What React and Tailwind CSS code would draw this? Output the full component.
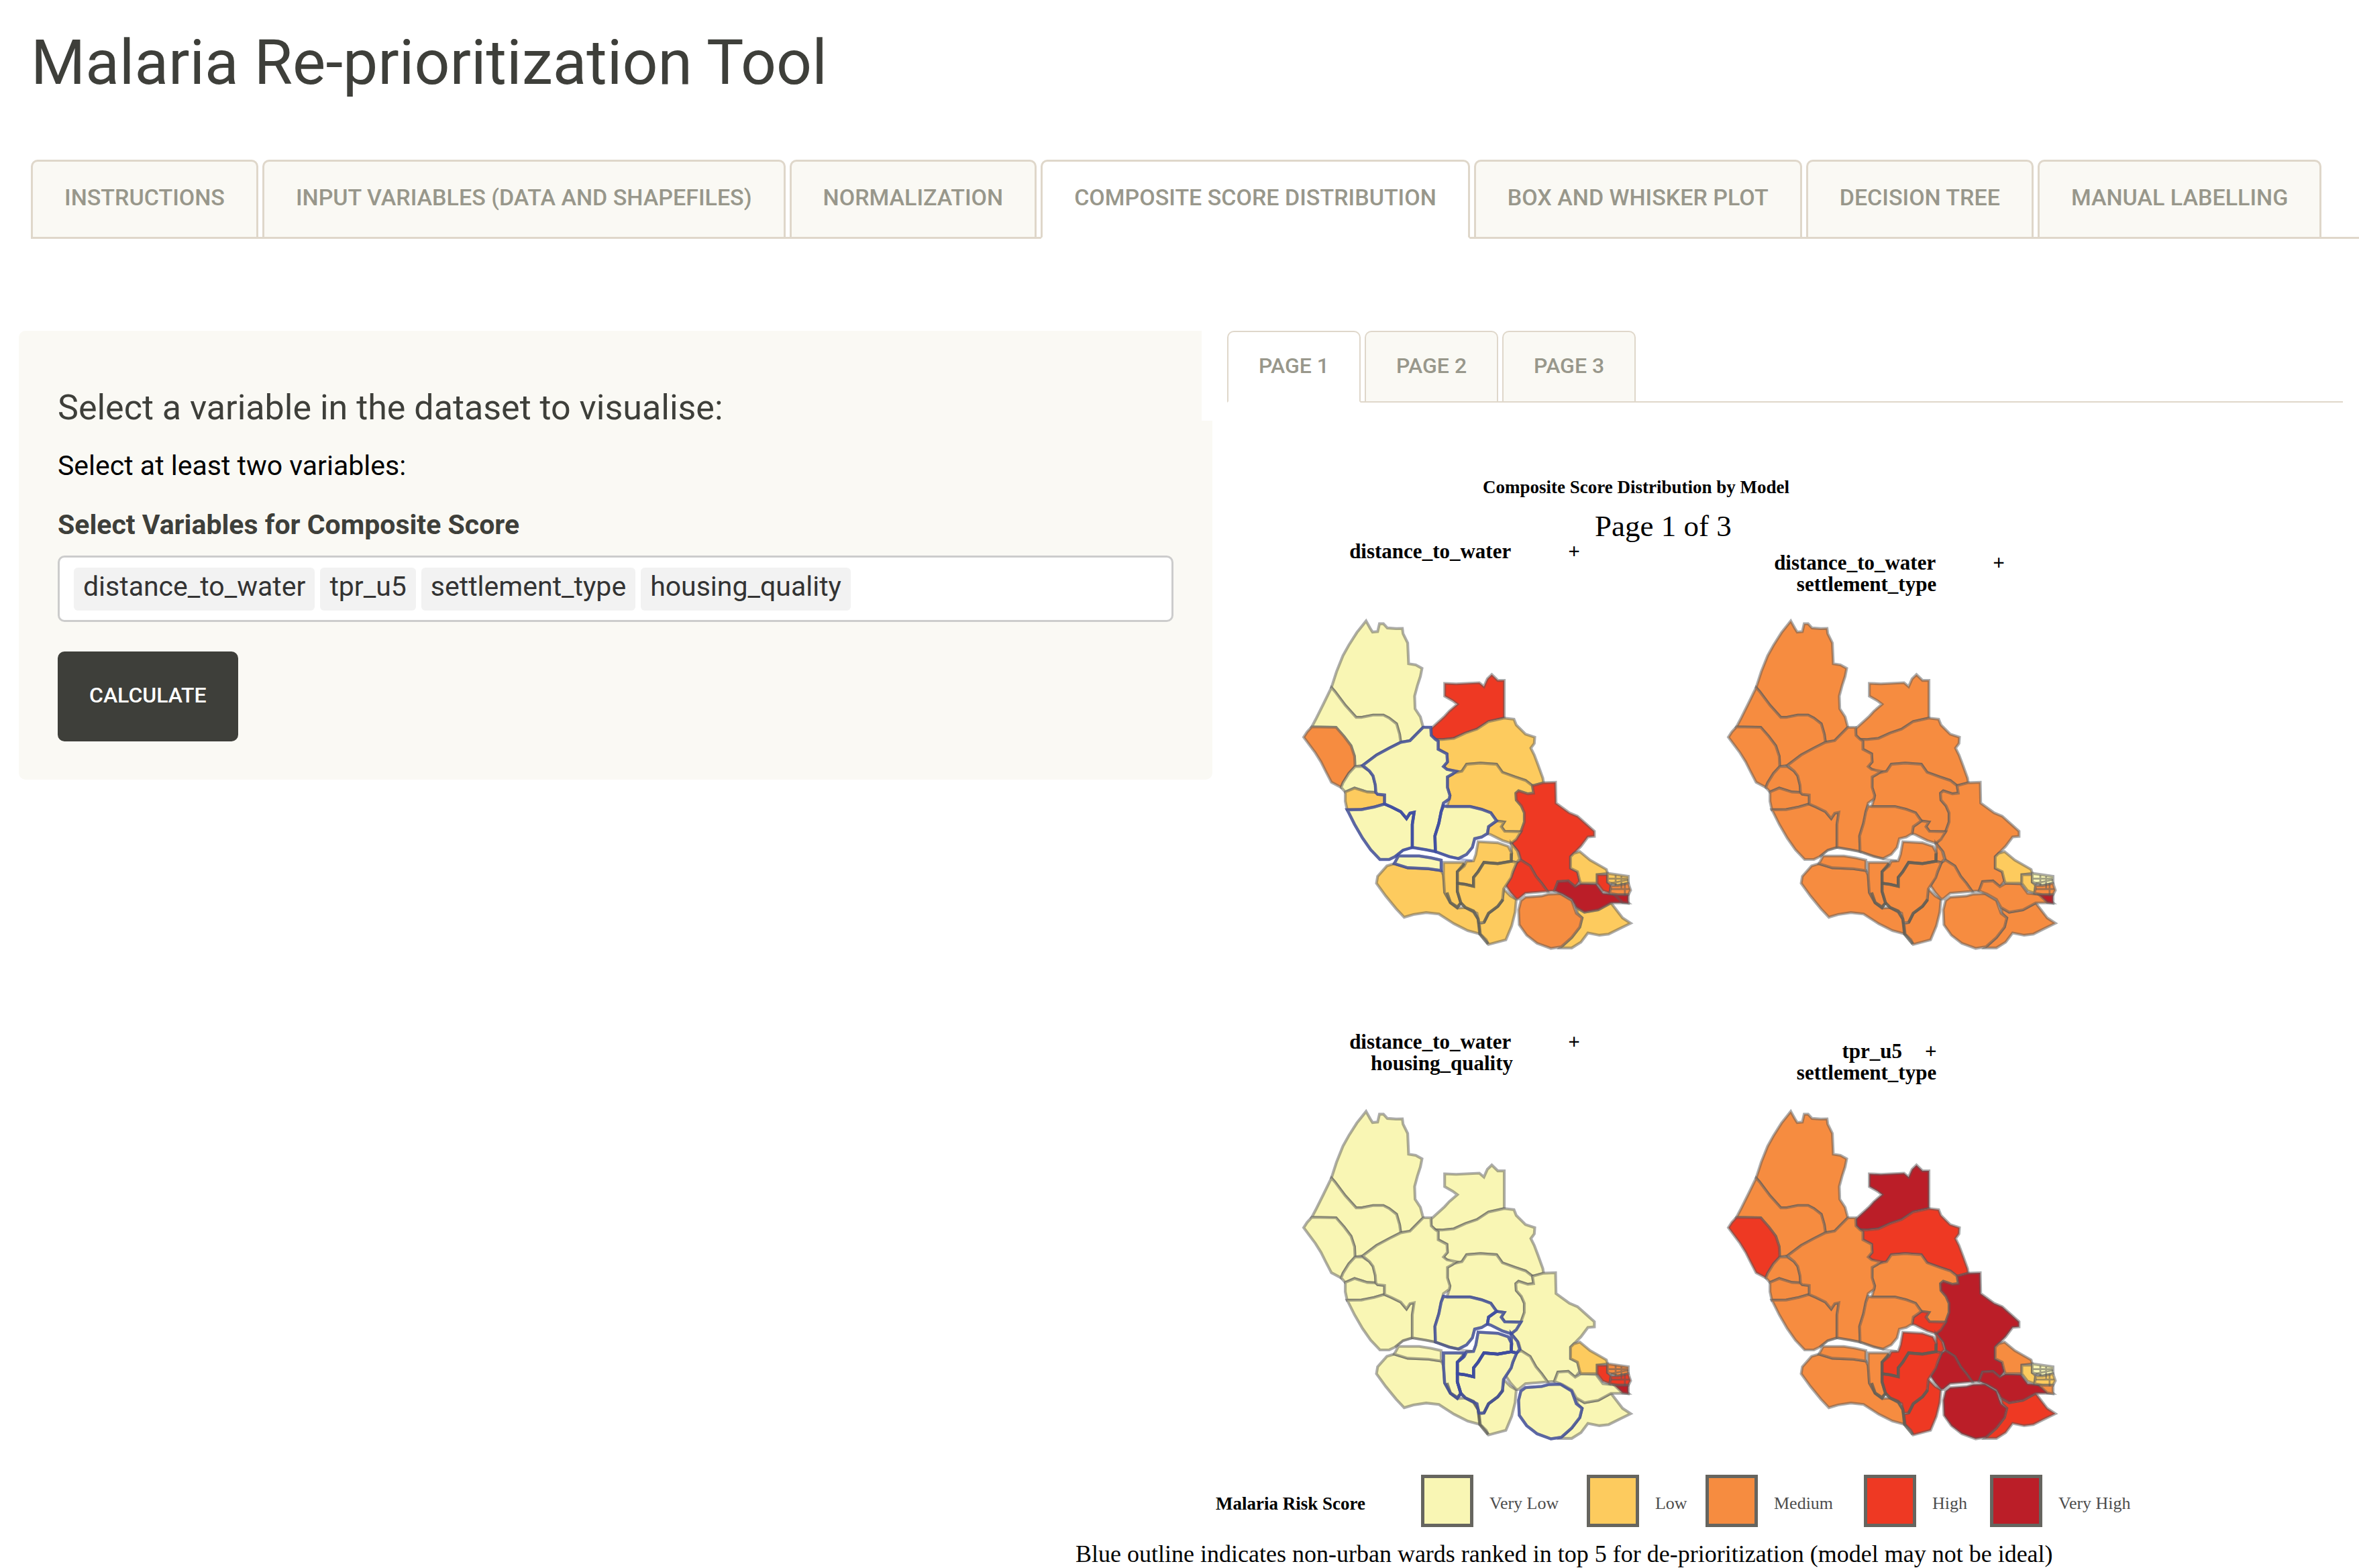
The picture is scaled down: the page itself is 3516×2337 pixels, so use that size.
import React from "react";

const FILL = { VL: "#f9f6b4", L: "#fdcb5e", M: "#f68c40", H: "#ee3923", VH: "#bb1e28" };

// Ward outlines, drawn on a 1568 x 1568 canvas.
const WARDS = {
  A: "340,80 358,112 368,128 390,126 398,92 415,92 432,110 470,113 497,112 500,135 520,175 524,265 555,270 582,285 575,320 562,360 550,405 552,460 575,495 587,540 530,598 490,605 485,570 472,525 440,500 415,487 370,487 320,497 297,497 250,445 205,385 190,368 212,300 240,230 265,185 300,130",
  B: "190,368 205,385 250,445 297,497 320,497 370,487 415,487 440,500 472,525 485,570 490,605 440,630 385,660 325,705 292,710 290,665 275,620 245,580 210,540 105,538 125,500 155,440",
  C: "105,538 210,540 245,580 275,620 290,665 292,710 265,740 240,780 232,800 190,778 165,730 145,690 120,650 90,610 70,583 85,560",
  D: "292,710 325,710 355,730 370,750 380,790 382,822 345,820 290,803 250,820 232,800 240,780 265,740",
  E: "250,820 290,803 345,820 382,822 390,830 420,833 420,872 375,885 320,896 258,897 250,860",
  G: "258,897 320,896 375,885 420,872 450,885 490,905 515,935 530,912 548,908 540,960 540,1060 500,1072 465,1100 440,1112 400,1112 360,1070 325,1020 290,960 265,910",
  H: "680,350 730,352 830,347 850,364 865,330 884,312 910,337 938,337 938,500 870,515 820,548 770,565 720,588 670,593 640,592 622,575 622,545 680,492 700,470 735,440 715,425 680,405",
  I: "938,500 980,505 990,530 1030,570 1070,583 1068,610 1053,630 1068,660 1085,705 1105,760 1108,780 1060,793 1030,770 985,755 930,735 905,700 835,695 775,700 755,730 720,738 690,722 675,710 692,690 690,655 652,635 652,600 640,592 670,593 720,588 770,565 820,548 870,515",
  J: "720,738 755,730 775,700 835,695 905,700 930,735 985,755 1030,770 1060,793 1065,825 1040,828 1000,815 988,825 990,855 1012,880 1025,910 1025,950 1010,992 940,990 925,970 938,950 905,945 880,910 840,895 790,883 690,883 700,850 703,835 692,800 692,755",
  K: "1060,793 1108,780 1160,778 1162,868 1220,910 1255,925 1300,965 1328,990 1328,1012 1300,1015 1270,1055 1240,1085 1225,1100 1225,1150 1255,1165 1265,1205 1245,1230 1215,1205 1170,1208 1155,1248 1125,1250 1100,1215 1075,1185 1050,1140 1010,1115 1000,1080 968,1042 1010,992 1025,950 1025,910 1012,880 990,855 988,825 1000,815 1040,828 1065,825",
  M: "905,945 938,950 925,970 940,990 1010,992 990,1025 968,1042 930,1030 880,1005 865,1000 870,970",
  O: "462,1130 520,1148 610,1152 665,1160 675,1180 680,1255 705,1300 735,1322 770,1320 805,1340 825,1370 835,1435 780,1420 720,1390 655,1348 600,1342 545,1350 505,1362 470,1325 425,1270 385,1215 390,1185 430,1140",
  P: "675,1125 765,1125 760,1145 735,1165 735,1250 750,1300 735,1322 705,1300 680,1255 675,1180",
  S: "935,1240 965,1270 990,1285 985,1340 970,1400 945,1460 870,1480 860,1460 835,1435 830,1390 850,1385 870,1345 910,1315 930,1290",
  T: "992,1125 1010,1115 1050,1140 1075,1185 1100,1215 1125,1250 1030,1258 1000,1283 990,1283 965,1255 945,1225 970,1180",
  Z: "968,1042 995,1075 1005,1110 992,1125 968,1120 970,1085",
  Q: "825,1035 910,1040 955,1055 970,1085 968,1120 910,1130 850,1125 825,1165 805,1190 805,1228 770,1220 735,1215 735,1165 765,1140 775,1120 805,1118 815,1090",
  R: "968,1120 992,1125 975,1165 968,1190 935,1240 930,1290 910,1315 870,1345 850,1385 828,1385 820,1345 770,1320 750,1300 735,1250 735,1215 770,1220 805,1228 805,1190 825,1165 850,1125 910,1130",
  W: "1250,1320 1285,1340 1345,1330 1400,1300 1415,1320 1450,1365 1485,1388 1440,1410 1390,1435 1350,1440 1300,1430 1270,1470 1230,1495 1180,1495 1230,1450 1265,1405 1275,1365 1255,1345",
  U: "1010,1290 1030,1275 1100,1270 1130,1262 1180,1260 1230,1290 1250,1345 1275,1365 1265,1405 1230,1450 1185,1490 1140,1497 1080,1475 1035,1440 1003,1395 1000,1330",
  V: "1155,1248 1170,1208 1215,1205 1245,1230 1270,1215 1335,1218 1365,1258 1430,1265 1475,1300 1400,1300 1345,1330 1285,1340 1250,1320 1230,1285 1190,1262",
  X: "1240,1085 1265,1078 1310,1115 1380,1155 1385,1172 1340,1178 1340,1215 1270,1215 1265,1205 1255,1165 1225,1150 1225,1100",
  Y1: "1340,1178 1385,1178 1385,1210 1400,1225 1395,1258 1365,1248 1340,1215",
  Y2: "1385,1172 1475,1185 1475,1215 1430,1225 1385,1210",
  Y3: "1400,1225 1430,1225 1475,1215 1485,1245 1475,1265 1430,1265 1395,1258",
  Y4: "1415,1265 1475,1265 1475,1302 1450,1298",
  F: "587,540 620,540 622,575 640,592 652,600 652,635 690,655 692,690 675,710 690,722 730,730 715,742 692,755 692,800 703,835 700,850 675,868 665,905 655,955 638,1010 640,1078 600,1070 540,1060 540,960 548,908 530,912 515,935 490,905 450,885 420,872 420,833 390,830 382,822 380,790 370,750 355,730 325,705 385,660 440,630 490,605 530,598",
  L: "675,880 690,883 790,883 840,895 880,910 905,945 870,970 865,1000 840,1015 810,1022 800,1060 775,1090 740,1108 700,1100 640,1078 638,1010 655,955 665,905",
  N: "480,1097 570,1097 620,1105 665,1115 665,1160 610,1152 520,1148 462,1130",
};

const CREEKS = [
  "765,1130 735,1165 735,1250 750,1300 735,1318 705,1298 690,1255",
  "735,1215 770,1220 805,1228 805,1190 825,1165 850,1125 910,1130 968,1120 968,1085",
  "750,1300 770,1320 805,1335 825,1370 832,1435 868,1478",
  "850,1385 870,1345 910,1315 932,1285",
];

const MAPS = [
  {
    title: ["distance_to_water", "+", ""],
    base: "VL",
    fills: { C: "M", E: "L", H: "H", I: "L", J: "L", K: "H", M: "L", O: "L", P: "L", Q: "L", R: "L", S: "L", Z: "L", T: "H", U: "M", V: "VH", W: "L", X: "L", Y1: "H", Y2: "L", Y3: "M", Y4: "VH" },
    blue: ["F", "L", "G", "N"],
  },
  {
    title: ["distance_to_water", "+", "settlement_type"],
    base: "M",
    fills: { X: "L", Y1: "L", Y2: "VL", Y4: "VH" },
    blue: [],
  },
  {
    title: ["distance_to_water", "+", "housing_quality"],
    base: "VL",
    fills: { X: "L", Y1: "H", Y2: "M", Y3: "H", Y4: "VH" },
    blue: ["L", "M", "P", "Q", "R", "Z", "U"],
  },
  {
    title: ["tpr_u5", "+", "settlement_type"],
    base: "M",
    fills: { C: "H", H: "VH", I: "H", K: "VH", M: "H", Q: "H", R: "H", S: "H", Z: "H", T: "VH", U: "VH", V: "VH", W: "H", Y1: "L", Y2: "VL", Y3: "L" },
    blue: [],
  },
];

function WardMap({ map }) {
  const outline = (k) => map.blue.includes(k);
  return (
    <svg viewBox="0 0 1568 1568" className="block h-[540px] w-[540px]" role="img" aria-label={map.title.join(" ")}>
      {Object.entries(WARDS).map(([k, pts]) => (
        <polygon key={k} points={pts} fill={FILL[map.fills[k] || map.base]} stroke="#595959" strokeOpacity="0.5" strokeWidth="12" />
      ))}
      {CREEKS.map((pts) => (
        <polyline key={pts} points={pts} fill="none" stroke="#5c5c54" strokeOpacity="0.75" strokeWidth="13" />
      ))}
      {Object.entries(WARDS).map(([k, pts]) =>
        outline(k) ? <polygon key={k} points={pts} fill="none" stroke="#3a4aa5" strokeOpacity="0.7" strokeWidth="13" /> : null
      )}
      <g fill="none" stroke="#595959" strokeOpacity="0.55" strokeWidth="8">
        <path d="M1390 1195H1470M1400 1215L1475 1200M1420 1180V1225M1445 1185V1240M1400 1240H1480M1460 1215V1270" />
      </g>
      <path
        d="M465 1100L500 1072L540 1060L600 1070L640 1078L740 1110L800 1118"
        fill="none"
        stroke={map.blue.includes("F") ? "#3a4aa5" : "#595959"}
        strokeOpacity="0.4"
        strokeWidth="10"
      />
    </svg>
  );
}

function MapTitle({ title, gap }) {
  return (
    <h3 className="w-[540px] pr-3 text-[31px] leading-8 font-bold whitespace-nowrap">
      <span className={"flex justify-center " + gap}>
        <span>{title[0]}</span>
        <span>{title[1]}</span>
      </span>
      {title[2] && <span className="block pr-17 text-center">{title[2]}</span>}
    </h3>
  );
}

const TABS = [
  "Instructions",
  "Input variables (data and shapefiles)",
  "Normalization",
  "Composite score distribution",
  "Box and whisker plot",
  "Decision tree",
  "Manual labelling",
];

function MainTab({ label, active }) {
  return (
    <button
      type="button"
      role="tab"
      aria-selected={active}
      className={
        "rounded-t-[10px] border-3 px-[47px] pt-[33px] pb-[39px] text-[34px] leading-10 font-medium whitespace-nowrap text-[#98978b] uppercase " +
        (active ? "-mb-[3px] border-[#dfd7ca] border-b-white bg-white" : "border-[#dfd7ca] border-b-0 bg-[#faf9f4]")
      }
    >
      {label}
    </button>
  );
}

function PageTab({ label, active }) {
  return (
    <button
      type="button"
      role="tab"
      aria-selected={active}
      className={
        "rounded-t-[10px] border-2 px-[45px] pt-[30px] pb-[33px] text-[32px] leading-10 font-medium whitespace-nowrap text-[#98978b] uppercase " +
        (active ? "-mb-[2px] border-[#dfd7ca] border-b-white bg-white" : "border-[#dfd7ca] border-b-0 bg-[#faf9f4]")
      }
    >
      {label}
    </button>
  );
}

const LEGEND = [
  ["Very Low", "bg-[#f9f6b4]"],
  ["Low", "bg-[#fdcb5e]"],
  ["Medium", "bg-[#f68c40]"],
  ["High", "bg-[#ee3923]"],
  ["Very High", "bg-[#bb1e28]"],
];

const CHIPS = ["distance_to_water", "tpr_u5", "settlement_type", "housing_quality"];

export default function App() {
  return (
    <div className="overflow-hidden bg-white pt-11 font-[Roboto,sans-serif] text-[#3e3f3a]">
      <h1 className="pl-[46px] text-[93px] leading-[100px] font-normal">Malaria Re-prioritization Tool</h1>

      <div role="tablist" className="mt-[94px] ml-[46px] flex gap-[6px] border-b-3 border-[#dfd7ca]">
        {TABS.map((t) => (
          <MainTab key={t} label={t} active={t === "Composite score distribution"} />
        ))}
      </div>

      <main className="mt-[137px] grid grid-cols-[1779fr_1685fr] items-start pr-6 pl-7">
        <form className="min-w-0 rounded-[10px] bg-[#faf9f4] px-[58px] pt-[87px] pb-[57px]" onSubmit={(e) => e.preventDefault()}>
          <h4 className="text-[52px] leading-14">Select a variable in the dataset to visualise:</h4>
          <p className="mt-[34px] text-[41px] leading-12 text-black">Select at least two variables:</p>
          <label htmlFor="variables" className="mt-10 block text-[41px] leading-12 font-bold">
            Select Variables for Composite Score
          </label>
          <div className="mt-[22px] flex h-[99px] items-center gap-2 rounded-[10px] border-3 border-[#cccccc] bg-white px-[21px]">
            {CHIPS.map((c) => (
              <span key={c} className="rounded-[6px] bg-[#f2f2f2] px-[14px] pt-1 pb-3 text-[41px] leading-12 text-[#333333]">
                {c}
              </span>
            ))}
            <input id="variables" type="text" className="w-0 min-w-0 flex-1 bg-transparent text-[41px] outline-none" />
          </div>
          <button
            type="submit"
            className="mt-11 block h-[134px] rounded-[10px] bg-[#3e3f3a] px-[47px] pb-1 text-[32px] font-medium text-white uppercase"
          >
            Calculate
          </button>
        </form>

        <section className="relative min-w-0">
          <div className="-ml-4 bg-white pb-[27px] pl-[38px]">
            <div role="tablist" className="flex gap-[6px] border-b-2 border-[#dfd7ca]">
              <PageTab label="Page 1" active />
              <PageTab label="Page 2" active={false} />
              <PageTab label="Page 3" active={false} />
            </div>
          </div>

          <figure className="pt-[83px] font-['Liberation_Serif',serif] text-black">
            <h2 className="pl-[403px] text-[27px] leading-8 font-bold">Composite Score Distribution by Model</h2>
            <p className="mt-5 pl-[570px] text-[45px] leading-11">Page 1 of 3</p>

            <div className="grid grid-cols-[540px_540px] gap-x-[93px] gap-y-[99px] pl-[112px]">
              <div>
                <div className="h-[92px]">
                  <MapTitle title={MAPS[0].title} gap="gap-[85px]" />
                </div>
                <WardMap map={MAPS[0]} />
              </div>
              <div>
                <div className="h-[92px] pt-[17px]">
                  <MapTitle title={MAPS[1].title} gap="gap-[85px]" />
                </div>
                <WardMap map={MAPS[1]} />
              </div>
              <div>
                <div className="h-[92px]">
                  <MapTitle title={MAPS[2].title} gap="gap-[85px]" />
                </div>
                <WardMap map={MAPS[2]} />
              </div>
              <div>
                <div className="h-[92px] pt-[14px]">
                  <MapTitle title={MAPS[3].title} gap="gap-[34px]" />
                </div>
                <WardMap map={MAPS[3]} />
              </div>
            </div>

            <div className="mt-[29px] flex items-center gap-[83px] pl-[5px]">
              <span className="pt-2 text-[27px] leading-8 font-bold whitespace-nowrap">Malaria Risk Score</span>
              <ul className="grid grid-cols-[247px_177px_236px_188px_auto]">
                {LEGEND.map(([name, color]) => (
                  <li key={name} className="flex items-center gap-6 text-[26px] leading-8 whitespace-nowrap text-[#4d4d4d]">
                    <span className={"size-[78px] border-5 border-[#66655f] " + color} />
                    <span className="pt-2">{name}</span>
                  </li>
                ))}
              </ul>
            </div>

            <figcaption className="mt-5 -ml-[204px] text-[36px] leading-10 whitespace-nowrap">
              Blue outline indicates non-urban wards ranked in top 5 for de-prioritization (model may not be ideal)
            </figcaption>
          </figure>
        </section>
      </main>
    </div>
  );
}
